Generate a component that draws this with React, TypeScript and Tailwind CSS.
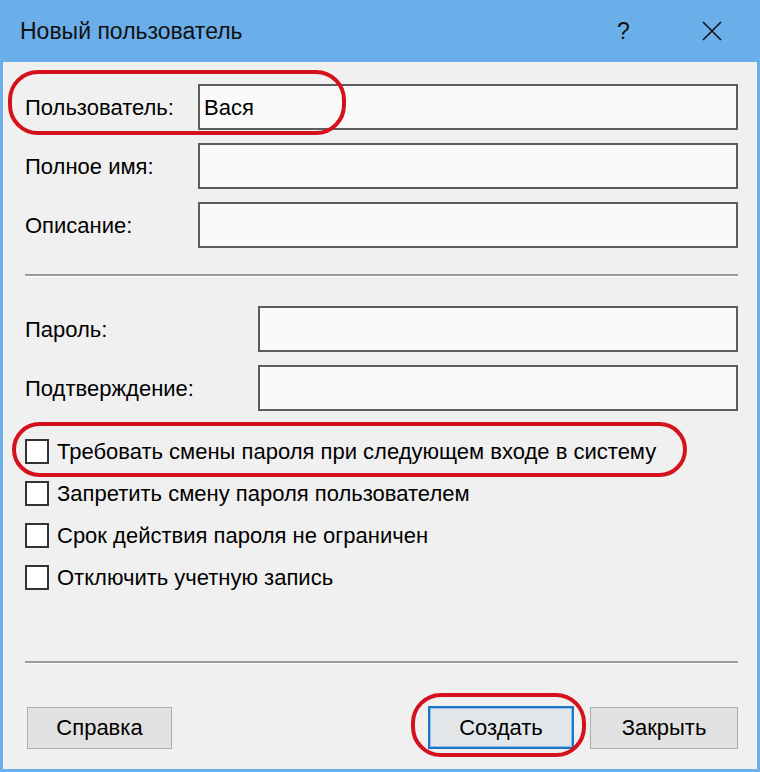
import React from 'react';

const font = { fontFamily: '"Liberation Sans", Arial, sans-serif' };

const TextRow: React.FC<{ label: string; value?: string; labelW: string }> = ({ label, value, labelW }) => (
  <div className="flex items-center h-[46px]">
    <div className={`${labelW} shrink-0 text-[22px] text-black`}>{label}</div>
    <div className="flex-1 h-full border-2 border-[#5c5c5c] bg-[#fafafa] flex items-center px-[4px] text-[22px] text-black">
      {value}
    </div>
  </div>
);

const Check: React.FC<{ label: string }> = ({ label }) => (
  <div className="flex items-center h-[25px] gap-[8px]">
    <div className="w-[24px] h-[25px] border-2 border-[#333] bg-white shrink-0" />
    <span className="text-[22px] text-black whitespace-nowrap">{label}</span>
  </div>
);

const Separator: React.FC = () => (
  <div className="flex flex-col">
    <div className="h-[2px] bg-[#9a9a9a]" />
    <div className="h-[1px] bg-white" />
  </div>
);

const App: React.FC = () => {
  return (
    <div className="w-[760px] h-[772px] bg-[#f0f0f0] flex flex-col relative overflow-hidden" style={font}>
      {/* title bar */}
      <div className="h-[62px] bg-[#6aaeea] flex items-center pl-[20px] shrink-0">
        <span className="text-[23px] text-[#111] flex-1">Новый пользователь</span>
        <span className="text-[23px] text-[#111] w-[47px]">?</span>
        <div className="w-[96px] flex justify-center">
          <svg width="20" height="20" viewBox="0 0 20 20">
            <path d="M1 1 L19 19 M19 1 L1 19" stroke="#111" strokeWidth="1.6" fill="none" />
          </svg>
        </div>
      </div>

      {/* body */}
      <div className="flex-1 border-x-[3px] border-b-[3px] border-[#6aaeea] pl-[22px] pr-[19px] flex flex-col">
        <div className="mt-[22px] flex flex-col gap-[13px]">
          <TextRow label="Пользователь:" value="Вася" labelW="w-[173px]" />
          <TextRow label="Полное имя:" labelW="w-[173px]" />
          <TextRow label="Описание:" labelW="w-[173px]" />
        </div>

        <div className="mt-[26px]">
          <Separator />
        </div>

        <div className="mt-[29px] flex flex-col gap-[13px]">
          <TextRow label="Пароль:" labelW="w-[233px]" />
          <TextRow label="Подтверждение:" labelW="w-[233px]" />
        </div>

        <div className="mt-[28px] flex flex-col gap-[17px]">
          <Check label="Требовать смены пароля при следующем входе в систему" />
          <Check label="Запретить смену пароля пользователем" />
          <Check label="Срок действия пароля не ограничен" />
          <Check label="Отключить учетную запись" />
        </div>

        <div className="mt-[71px]">
          <Separator />
        </div>

        <div className="mt-[42px] flex items-center">
          <button className="ml-[2px] w-[145px] h-[42px] border border-[#adadad] bg-[#e1e1e1] text-[22px] text-black">
            Справка
          </button>
          <div className="flex-1" />
          <button className="w-[146px] h-[43px] border-2 border-[#1b74c4] bg-[#e3e6e9] text-[22px] text-black shadow-[inset_0_0_0_1px_#8ec0ea]">
            Создать
          </button>
          <button className="ml-[16px] w-[148px] h-[42px] border border-[#adadad] bg-[#e1e1e1] text-[22px] text-black">
            Закрыть
          </button>
        </div>
      </div>

      {/* red annotation ovals */}
      <div className="absolute left-[8px] top-[70px] w-[338px] h-[65px] border-[4px] border-[#d5121c] rounded-[30px] pointer-events-none" />
      <div className="absolute left-[12px] top-[422px] w-[675px] h-[55px] border-[4px] border-[#d5121c] rounded-[28px] pointer-events-none" />
      <div className="absolute left-[411px] top-[693px] w-[175px] h-[64px] border-[4px] border-[#d5121c] rounded-[30px] pointer-events-none" />
    </div>
  );
};

export default App;
